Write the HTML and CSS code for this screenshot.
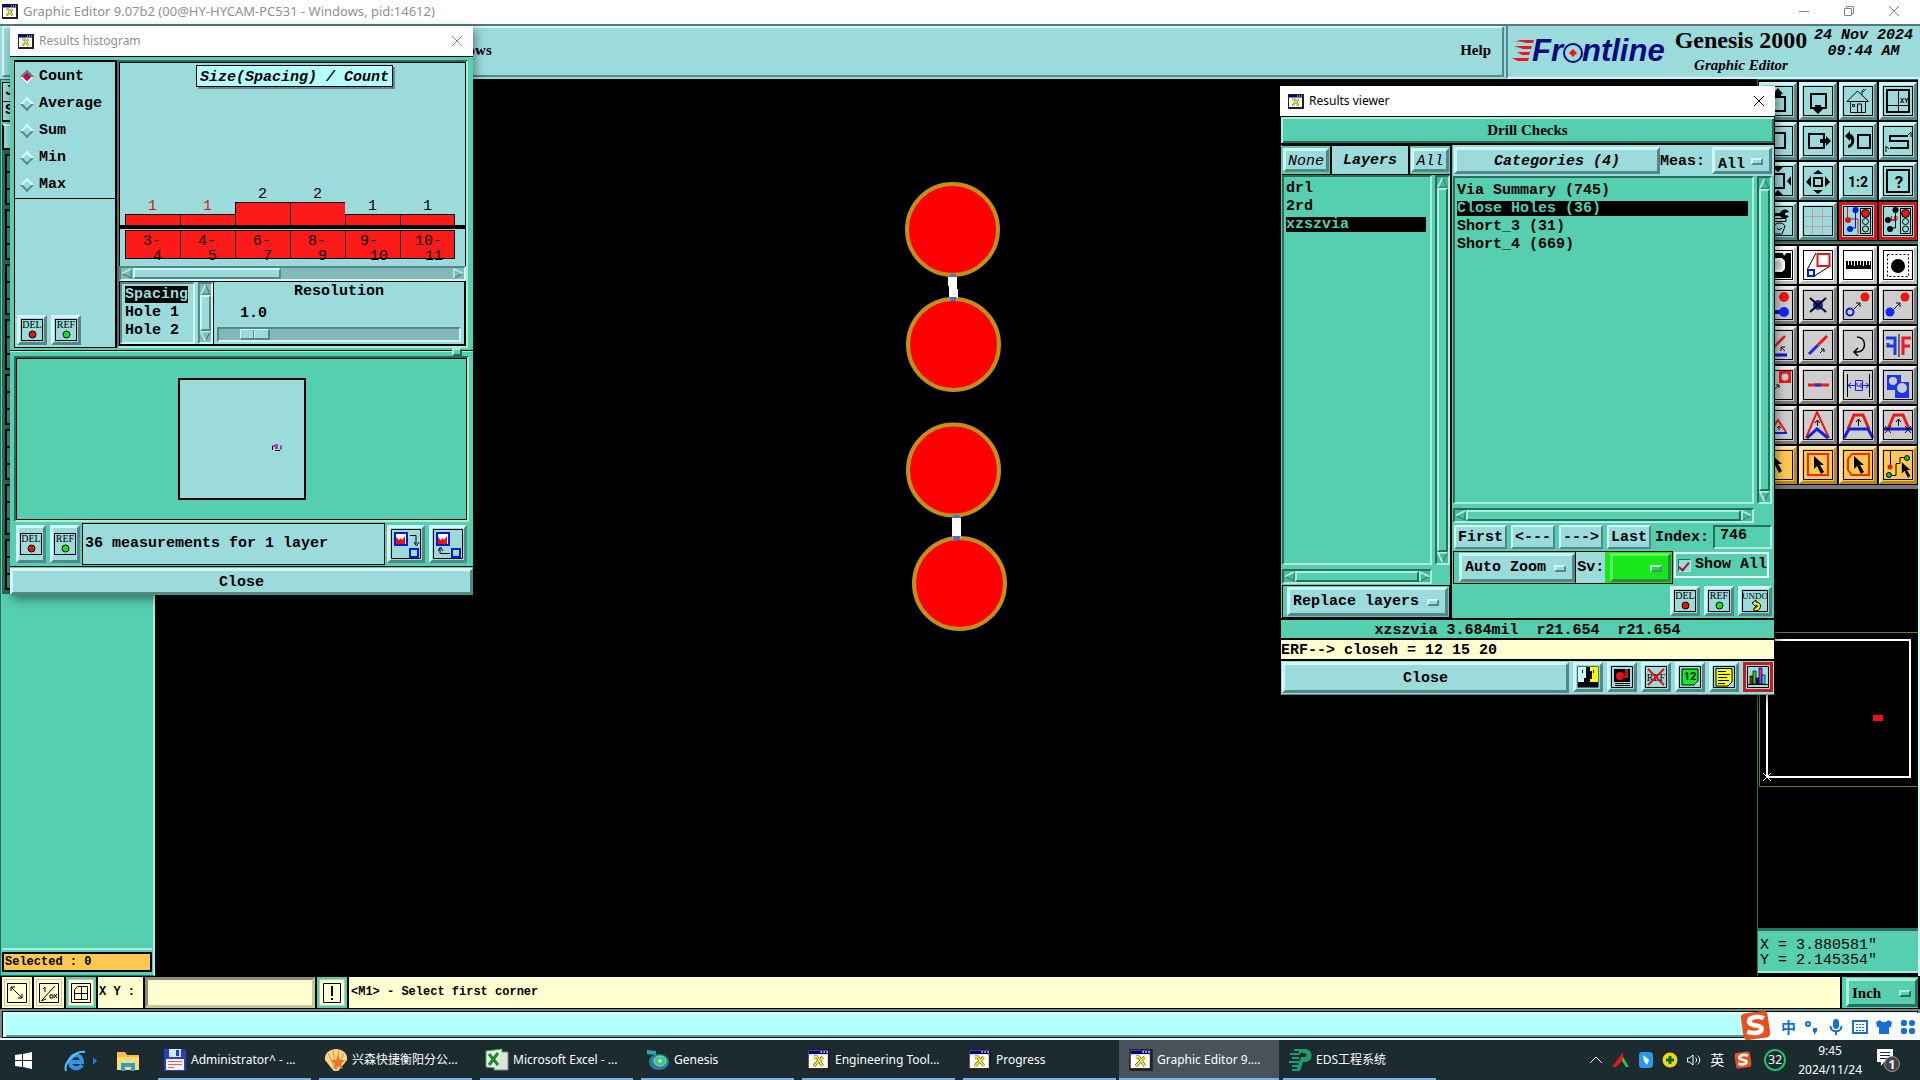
FILE: index.html
```html
<!DOCTYPE html>
<html lang="en">
<head>
<meta charset="utf-8">
<title>Graphic Editor</title>
<link rel="stylesheet" href="styles.css">
</head>
<body>
<svg class="defs" aria-hidden="true">
  <defs>
    <symbol id="xwin" viewBox="0 0 16 15"><rect width="16" height="15" fill="#222"/><rect x="1" y="1" width="13" height="12" fill="#fff"/><rect x="1" y="1" width="13" height="2.500" fill="#000080"/><path d="M9 2h1M11 2h1M13 2h1" stroke="#fff"/><path d="M4.500 5.500h2l4 6M10.500 5.500L4.500 11.500" fill="none" stroke="#444" stroke-width="2"/><path d="M4.500 5.500h2l4 6M10.500 5.500L4.500 11.500" fill="none" stroke="#f4ee20" stroke-width="1.300"/></symbol>
    <symbol id="del" viewBox="0 0 24 24"><rect x="1.500" y="1.500" width="21" height="21" fill="none" stroke="#000"/><text x="12" y="10" class="cap">DEL</text><circle cx="12.500" cy="16.500" r="3.500" fill="#f01010" stroke="#000"/></symbol>
    <symbol id="ref" viewBox="0 0 24 24"><rect x="1.500" y="1.500" width="21" height="21" fill="none" stroke="#000"/><text x="12" y="10" class="cap">REF</text><circle cx="12.500" cy="16.500" r="3.500" fill="#10e820" stroke="#000"/></symbol>
    <symbol id="up" viewBox="0 0 12 12"><path d="M6 1L11 11H1z" fill="none" stroke="#286e5c"/><path d="M1 11L6 1" stroke="#a9f0dc" stroke-width="2"/></symbol>
    <symbol id="down" viewBox="0 0 12 12"><path d="M1 1h10L6 11z" fill="none" stroke="#286e5c"/><path d="M11 1H1l5 10" fill="none" stroke="#a9f0dc" stroke-width="2"/></symbol>
    <symbol id="lt" viewBox="0 0 12 12"><path d="M11 1v10L1 6z" fill="none" stroke="#286e5c"/><path d="M11 1L1 6" stroke="#a9f0dc" stroke-width="2"/></symbol>
    <symbol id="rt" viewBox="0 0 12 12"><path d="M1 1l10 5L1 11z" fill="none" stroke="#286e5c"/><path d="M1 11V1l10 5" fill="none" stroke="#a9f0dc" stroke-width="2"/></symbol>
    <symbol id="cursor" viewBox="0 0 14 18"><path d="M1 0l10 9-4 0 4 7-3 2-4-8-3 3z"/></symbol>
    <symbol id="sogou" viewBox="0 0 30 30"><rect x="2" y="2" width="26" height="26" rx="4" fill="#e8501c" transform="rotate(-8 15 15)"/><path d="M23 8C17 5 8 7 9 12c1 4 12 2 12 6 0 5-8 5-14 3" fill="none" stroke="#fff" stroke-width="4.500"/></symbol>
  </defs>
</svg>

<div class="app">
  <header class="titlebar main-title">
    <svg class="ico16"><use href="#xwin"/></svg>
    <h1>Graphic Editor 9.07b2 (00@HY-HYCAM-PC531 - Windows, pid:14612)</h1>
    <div class="wincontrols">
      <button aria-label="Minimize"><svg width="12" height="12"><path d="M1 6.500h10" stroke="#888"/></svg></button>
      <button aria-label="Restore"><svg width="12" height="12" fill="none" stroke="#888"><path d="M1.500 3.500h7v7h-7zM3.500 3.500v-2h7v7h-2"/></svg></button>
      <button aria-label="Close"><svg width="12" height="12" stroke="#888"><path d="M1 1l10 10M11 1L1 11"/></svg></button>
    </div>
  </header>

  <div class="menurow">
    <nav class="menubar"><a href="#" class="m-windows">Windows</a><a href="#">Help</a></nav>
    <div class="brand">
      <svg class="logo" width="156" height="28" viewBox="0 0 156 28">
        <path d="M5 3h17l-1 3h-7zM2 9h18l-1 3h-8zM5 15h13l-1 3h-7zM0 21h17l-1 3H6z" fill="#ee1418"/>
        <path d="M0 5l16-2v1zM0 23l16-2v1z" fill="#ee1418"/>
        <text x="20" y="24" class="logotext">Fr</text>
        <circle cx="61" cy="16" r="9" fill="none" stroke="#0a0a80" stroke-width="2"/>
        <path d="M61 12l4 4-4 4-4-4z" fill="#ee1418"/>
        <text x="70" y="24" class="logotext">ntline</text>
      </svg>
      <div class="product"><strong>Genesis 2000</strong><em>Graphic Editor</em></div>
      <time class="stamp">24 Nov 2024<br>09:44 AM</time>
    </div>
  </div>

  <main class="work">
    <aside class="left">
      <div class="jobbox"><span>J</span><span>S</span></div>
      <div class="jobbtn"></div>
      <div class="layers"><i></i><i></i><i></i><i></i><i></i><i></i><i></i><i></i></div>
      <div class="leftfill"></div>
      <div class="selected">Selected : 0</div>
    </aside>

    <section class="canvas">
      <svg width="100%" height="100%">
        <g fill="#f00" stroke="#c09018" stroke-width="4">
          <circle cx="797.500" cy="150.500" r="45.500"/><circle cx="798.500" cy="265.500" r="45.500"/>
          <circle cx="798.500" cy="391" r="45.500"/><circle cx="804.500" cy="504.500" r="45.500"/>
        </g>
        <path d="M793 198h9v12h1v9h-9v-12h-1zM797 439h9v20h-9z" fill="#fff"/>
        <path d="M794 198l2-3h4l2 3zM794 218h8l-2 4h-4zM797 439l2-3h5l2 3zM797 457h9l-2 4h-5z" fill="#3e70e0"/>
      </svg>
    </section>

    <aside class="right">
      <div class="tools t1">
        <button aria-label="Pan up"><svg viewBox="0 0 32 32"><path d="M8 12h15v14H8z" class="k2"/><path d="M16 3l5 6h-2v4h-6V9h-2z"/></svg></button>
        <button aria-label="Pan down"><svg viewBox="0 0 32 32"><path d="M9 9h15v14H9z" class="k2"/><path d="M16 29l5-5h-2v-4h-6v4h-2z"/></svg></button>
        <button aria-label="Home"><svg viewBox="0 0 32 32"><path d="M5 16.500L15.500 6l11 10.500zM8.500 17v10.500h15V17M15.500 27v-8h4v8M10.500 19.500h2v2h-2zM20 10V6l2-2M21 7l3-3" class="k1"/></svg></button>
        <button aria-label="Zoom window"><svg viewBox="0 0 32 32"><path d="M5 5h22v22H5z" class="k2"/><path d="M5 20.500h22M16.500 5v22" class="k1"/><text x="18" y="18" class="tiny">XY</text></svg></button>
        <button aria-label="Pan left"><svg viewBox="0 0 32 32"><path d="M7 8h16v15H7z" class="k2"/></svg></button>
        <button aria-label="Pan right"><svg viewBox="0 0 32 32"><path d="M7 9h15v14H7z" class="k2"/><path d="M29 16l-5 5v-3h-6v-4h6v-3z"/></svg></button>
        <button aria-label="Previous view"><svg viewBox="0 0 32 32"><path d="M16 10h12v13H16z" class="k2"/><path d="M3 11l5-5v3c6 1 6 13-2 14v-3c4-1 4-6 2-6v2z"/></svg></button>
        <button aria-label="Serpentine"><svg viewBox="0 0 32 32"><path d="M26 11H8v5h18v7H8" class="k2"/><path d="M26 10l3-3v5M7 24l-3-3v6" class="k1"/></svg></button>
        <button aria-label="Zoom out"><svg viewBox="0 0 32 32"><path d="M9 9h13v14H9z" class="k2"/><path d="M16 7l-5-5h10zM16 25l-5 5h10zM25 16l4-5v10z"/></svg></button>
        <button aria-label="Zoom in"><svg viewBox="0 0 32 32"><path d="M12 13h8v8h-8z" class="k2"/><path d="M16 5l5 4H11zM16 29l5-4H11zM4 17l5-6v11zM28 17l-5-6v11z"/></svg></button>
        <button aria-label="One to two"><svg viewBox="0 0 32 32"><text x="16" y="22" class="big">1:2</text></svg></button>
        <button aria-label="Help"><svg viewBox="0 0 32 32"><path d="M5 5h22v22H5z" class="k2"/><text x="17" y="23" class="q">?</text></svg></button>
        <button aria-label="Setup"><svg viewBox="0 0 32 32"><path d="M10 8h8c2-5 8-4 9-1l-4 1v2l4 1c-2 3-7 3-9 0h-8z"/><path d="M8 13.500h16v3H8zM12 21c2-4 9-4 11 0l-3 8h-8l-4-6zM15 23l2 2 3-2" class="k1"/></svg></button>
        <button aria-label="Grid"><svg viewBox="0 0 32 32"><path d="M10.500 2v28M20.500 2v28M2 11.500h28M2 21.500h28" stroke="#c99" fill="none"/></svg></button>
        <button class="on" aria-label="Snap layers"><svg viewBox="0 0 32 32"><path d="M5.500 1v13H16v15" stroke="#e01010" fill="none"/><path d="M13.500 6v17H8" stroke="#0010d8" fill="none"/><circle cx="6" cy="15" r="3" fill="#e01010"/><circle cx="13.500" cy="5" r="3" fill="#0010f0"/><circle cx="8" cy="24" r="3" fill="#0010f0"/><g class="k1"><path d="M18.500 3.500h10v25h-10z"/><circle cx="23.500" cy="8.500" r="4" fill="#f01010"/><circle cx="23.500" cy="16.500" r="3"/><circle cx="23.500" cy="24" r="3"/></g></svg></button>
        <button class="on" aria-label="Snap nets"><svg viewBox="0 0 32 32"><path d="M13.500 6v17H8M6 15h8" class="k1"/><path d="M9 15h6M9.500 11v4M12.500 11v4M15 11v4" stroke="#e01010"/><circle cx="6" cy="15" r="3"/><circle cx="13.500" cy="5" r="3"/><circle cx="8" cy="24" r="3"/><g class="k1"><path d="M18.500 3.500h10v25h-10z"/><circle cx="23.500" cy="8.500" r="4" fill="#f01010"/><circle cx="23.500" cy="16.500" r="3"/><circle cx="23.500" cy="24" r="3"/></g></svg></button>
      </div>
      <div class="tools t2">
        <button class="w" aria-label="Pads"><svg viewBox="0 0 32 32"><path d="M8 4h21v25H8z"/><path d="M10 11l3-2h7l3 3v8l-3 3h-7l-3-3zM20 2h6l-4 5z" fill="#fff"/><rect x="12" y="12" width="8" height="8" rx="3" fill="#ddd"/></svg></button>
        <button class="w" aria-label="Copy scaled"><svg viewBox="0 0 32 32"><path d="M5 21L14 4M11 28l17-11" class="k1"/><path d="M15.500 5h12v12h-12z" stroke="#e8141c" stroke-width="2" fill="none"/><path d="M6 21h6v6H6z" stroke="#0018e0" stroke-width="2" fill="none"/></svg></button>
        <button class="w" aria-label="Measure"><svg viewBox="0 0 32 32"><path d="M4 12h25v8H4z"/><path d="M6.500 12v4M9.500 12v4M12.500 12v5M15.500 12v4M18.500 12v4M21.500 12v5M24.500 12v4M27.500 12v4" stroke="#fff"/></svg></button>
        <button class="w" aria-label="Select feature"><svg viewBox="0 0 32 32"><path d="M5.500 5.500h21v22h-21z" class="k1" stroke-dasharray="2 2"/><circle cx="16" cy="17" r="7"/></svg></button>
        <button aria-label="Connect"><svg viewBox="0 0 32 32"><circle cx="22" cy="8" r="5" fill="#f01414"/><path d="M8 23h14" stroke="#0018e0" stroke-width="4"/><circle cx="22" cy="23" r="5" fill="#1428f0"/></svg></button>
        <button aria-label="Delete"><svg viewBox="0 0 32 32"><circle cx="16" cy="16" r="5" fill="#1428d0"/><path d="M8 9l16 14M24 9L8 23" class="k2"/></svg></button>
        <button aria-label="Copy"><svg viewBox="0 0 32 32"><circle cx="23" cy="8" r="4.500" fill="#f01414"/><circle cx="8" cy="23" r="3.500" fill="none" stroke="#1020d0" stroke-width="2"/><path d="M12 20l6-6M14 14h4v4" class="k1"/></svg></button>
        <button aria-label="Move"><svg viewBox="0 0 32 32"><circle cx="23" cy="8" r="4.500" fill="#f01414"/><circle cx="8" cy="23" r="4.500" fill="#1428f0"/><path d="M12 20l6-6M14 14h4v4" class="k1"/></svg></button>
        <button aria-label="Rotate line"><svg viewBox="0 0 32 32"><path d="M8 22L23 7" stroke="#e8141c" stroke-width="2.500"/><path d="M8 26h17" stroke="#0018e0" stroke-width="3"/><path d="M23 22l-4-4M19 22v-4h4" class="k1"/></svg></button>
        <button aria-label="Extend line"><svg viewBox="0 0 32 32"><path d="M7 25l9-9" stroke="#1828f0" stroke-width="3"/><path d="M16 16l9-9" stroke="#f01820" stroke-width="3"/><path d="M18 24l4-4M19 20h3v3" class="k1"/></svg></button>
        <button aria-label="Rotate"><svg viewBox="0 0 32 32"><path d="M15 8c10 0 10 15 0 15h-3M16 19l-4 4 4 4" fill="none" stroke="#000" stroke-width="1.500"/></svg></button>
        <button aria-label="Mirror"><svg viewBox="0 0 32 32"><path d="M4 9h9v17M13 17H6v-3" stroke="#1838f0" stroke-width="3" fill="none"/><path d="M29 9h-8v17M21 17h7" stroke="#f01820" stroke-width="3" fill="none"/><path d="M17 5v23" class="k1"/></svg></button>
        <button aria-label="Reshape pad"><svg viewBox="0 0 32 32"><path d="M17 2h12v12H17z" fill="#f01818"/><circle cx="23" cy="8" r="3.500" fill="#ccc"/><path d="M13 20l4-4M14 16h3v3" class="k1"/></svg></button>
        <button aria-label="Break line"><svg viewBox="0 0 32 32"><path d="M6 16h21" stroke="#f01818" stroke-width="3"/><path d="M13 16h6" stroke="#2030e0" stroke-width="3"/></svg></button>
        <button aria-label="Stretch"><svg viewBox="0 0 32 32"><path d="M5.500 5v23M27.500 5v23" class="k1"/><path d="M13.500 11.500h7v10h-7zM6 16.500h7M21 16.500h6M9 14l-3 2.500L9 19M24 14l3 2.500-3 2.500M15 14v3h4M19 14v5" fill="none" stroke="#1020f0"/></svg></button>
        <button aria-label="Polarity"><svg viewBox="0 0 32 32"><path d="M5 6h14v7h8v16H13v-8H5z" fill="#1838f0"/><circle cx="11" cy="12" r="4" fill="#ccc"/><circle cx="20" cy="19" r="5" fill="#ccc"/></svg></button>
        <button aria-label="Peak small"><svg viewBox="0 0 32 32"><path d="M8 23l8-12 8 12" stroke="#f01818" stroke-width="2" fill="none"/><path d="M6 24h19" stroke="#1020e0" stroke-width="2"/><path d="M17 21v-4M15 19l2-2 2 2" class="k1"/></svg></button>
        <button aria-label="Peak large"><svg viewBox="0 0 32 32"><path d="M4 29L15 3l12 26" stroke="#f01818" stroke-width="2" fill="none"/><path d="M5 29l10-9 11 9" stroke="#1020e0" stroke-width="3" fill="none"/><path d="M15.500 17v-6M13 14l2.500-3 2.500 3" class="k1"/></svg></button>
        <button aria-label="Trapezoid"><svg viewBox="0 0 32 32"><path d="M6 20l6-14h9l6 14" stroke="#f01818" stroke-width="3" fill="none"/><path d="M2 29l5-9h19l5 9" stroke="#1020e0" stroke-width="3" fill="none"/><path d="M16.500 17v-7M14 13l2.500-3 2.500 3" class="k1"/></svg></button>
        <button aria-label="Trapezoid cut"><svg viewBox="0 0 32 32"><path d="M6 20l6-14h9l6 14" stroke="#f01818" stroke-width="3" fill="none"/><path d="M2 20h29" stroke="#1020e0" stroke-width="3"/><path d="M16.500 17v-7M14 13l2.500-3 2.500 3M3 17l6 7M9 17l-6 7M23 17l6 7M29 17l-6 7" class="k1"/></svg></button>
        <button class="o" aria-label="Select"><svg viewBox="0 0 32 32"><use href="#cursor" x="9" y="6" width="14" height="18"/></svg></button>
        <button class="o" aria-label="Select in rectangle"><svg viewBox="0 0 32 32"><path d="M6 5h20v21H6z" stroke="#e83010" stroke-width="2" fill="none"/><use href="#cursor" x="11" y="7" width="14" height="18"/></svg></button>
        <button class="o" aria-label="Select in polygon"><svg viewBox="0 0 32 32"><path d="M10 5h17v21H10l-4-5V10z" stroke="#e83010" stroke-width="2" fill="none"/><use href="#cursor" x="11" y="7" width="14" height="18"/></svg></button>
        <button class="o" aria-label="Select net"><svg viewBox="0 0 32 32"><path d="M8.500 2v15M7 26.500h7v-12h4v-6h6" class="k1"/><circle cx="8" cy="18" r="2.500" fill="#e02010"/><circle cx="7" cy="26" r="2.500" fill="#20c030" stroke="#000"/><circle cx="25" cy="9" r="2.500" fill="#20c030" stroke="#000"/><use href="#cursor" x="19" y="13" width="12" height="16"/></svg></button>
      </div>
      <div class="overview">
        <svg width="100%" height="100%">
          <path d="M1.500 143.500h159v154h-159z" fill="none" stroke="#4c8c28"/>
          <path d="M9 151h143v137H9z" fill="none" stroke="#fff" stroke-width="2"/>
          <path d="M5 284l8 8M13 284l-8 8" stroke="#fff"/>
          <rect x="115" y="226" width="10" height="6" fill="#f01010"/>
        </svg>
      </div>
      <div class="coords">X = 3.880581"<br>Y = 2.145354"</div>
    </aside>
  </main>

  <div class="cmdrow">
    <button class="cell ybtn" aria-label="Absolute"><svg width="22" height="22"><path d="M1.500 1.500h19v19h-19zM5 5l11 11M5 9V5h4M16 12v4h-4" class="k1"/></svg></button>
    <button class="cell ybtn" aria-label="Relative"><svg width="22" height="22"><path d="M1.500 1.500h19v19h-19zM4 18L17 4M5 7l2-2v5M3 19l5-2M12 13h3v3h-3zM16 12l3 4M19 12l-3 4" class="k1"/></svg></button>
    <button class="cell ybtn teal" aria-label="Grid snap"><svg width="22" height="22"><path d="M1.500 1.500h19v19h-19zM4.500 8l3-3.500h10v13h-13zM11.500 4v14M4 11.500h14" class="k1"/></svg></button>
    <label class="cell xylabel" for="xy">X Y :</label>
    <input class="xy" id="xy" type="text">
    <button class="cell ybtn teal" aria-label="Alert"><svg width="22" height="22"><path d="M2.500 1.500h17v19h-17z" class="k1"/><path d="M11 4v10M11 16v2" class="k2"/></svg></button>
    <div class="message">&lt;M1&gt; - Select first corner</div>
    <div class="unit"><span class="opt tealopt"><select aria-label="Units"><option>Inch</option></select><i></i></span></div>
  </div>
  <div class="progress"><div></div></div>

  <footer class="taskbar">
    <button class="tb-ico start" aria-label="Start"><svg width="18" height="18" fill="#fff"><path d="M0 3l7-1v6H0zM8 2l9-2v8H8zM0 9h7v6l-7-1zM8 9h9v8l-9-2z"/></svg></button>
    <button class="tb-ico ie" aria-label="Internet Explorer"><svg width="34" height="24"><path d="M18 16c-3 5-12 4-12-3C6 4 18 4 18 13H8" fill="none" stroke="#2c96ea" stroke-width="4"/><path d="M2 22C-1 14 12 1 21 3" fill="none" stroke="#5cc0f8" stroke-width="2"/><path d="M29 8l4 4-4 4z" fill="#1e78e8"/></svg></button>
    <button class="tb-ico folder" aria-label="Explorer"><svg width="24" height="22"><path d="M1 2h8l2 3h12v15H1z" fill="#f5c04c"/><path d="M1 7h22v13H1z" fill="#ffdb78"/><path d="M5 21v-8h14v8h-4v-4H9v4z" fill="#2e9ad8"/></svg></button>
    <button class="task first"><svg width="24" height="24"><path d="M1 1h20l2 2v20H1z" fill="#2440c8"/><path d="M6 1h12v8H6z" fill="#d8e4f8"/><path d="M13 2h3v6h-3z" fill="#2440c8"/><path d="M3 11h18v11H3z" fill="#fdf0f0"/><path d="M5 13.500h14M5 16.500h14M5 19.500h6" stroke="#e06060"/></svg><span>Administrator^ - ...</span></button>
    <button class="task"><svg width="24" height="24"><path d="M12 1C5 1 0 6 1 12l7 9 2 2h4l2-2 7-9c1-6-4-11-11-11z" fill="#f8d48c"/><path d="M12 22L4 5M12 22L9 2M12 22L15 2M12 22l8-17" stroke="#d89840"/><path d="M14 7l2 5 5 0-4 4 2 5-5-3-5 3 2-5-4-4 5 0z" fill="#e87820"/></svg><span>兴森快捷衡阳分公...</span></button>
    <button class="task"><svg width="24" height="24"><path d="M1 3l16-2v20L1 19z" fill="#e4f4e0" stroke="#4a9c50"/><path d="M17 4h6v18H9" fill="#d8e8d4" stroke="#888"/><path d="M4 6l9 11M13 5L4 17" stroke="#1f8838" stroke-width="3"/></svg><span>Microsoft Excel - ...</span></button>
    <button class="task"><svg width="24" height="24"><path d="M1 2l9 1v4l-9-1z" fill="#20b0a8"/><ellipse cx="13" cy="14" rx="10" ry="8" fill="#2a7e98"/><ellipse cx="14" cy="13" rx="6" ry="5" fill="#38c0a0" stroke="#8ce0b8"/><circle cx="14" cy="13" r="2" fill="#e8d848"/></svg><span>Genesis</span></button>
    <button class="task"><svg width="24" height="22"><use href="#xwin"/></svg><span>Engineering Tool...</span></button>
    <button class="task"><svg width="24" height="22"><use href="#xwin"/></svg><span>Progress</span></button>
    <button class="task active"><svg width="24" height="22"><use href="#xwin"/></svg><span>Graphic Editor 9....</span></button>
    <button class="task"><svg width="24" height="24"><path d="M6 2h12M2 6h10M4 10h7M1 14h10M4 18h8M4 22h6" fill="none" stroke="#18a068" stroke-width="2"/><path d="M11 1h7c8 2 7 12 0 13h-3l-3 9H8l5-14h4c2-1 2-3 0-4h-6z" fill="#18a068"/></svg><span>EDS工程系统</span></button>
    <div class="tray">
      <svg width="16" height="16"><path d="M2 11l6-6 6 6" fill="none" stroke="#fff"/></svg>
      <svg width="18" height="16"><path d="M11 0v8L4 15H0z" fill="#e81818"/><path d="M11 5l6 10h-3l-4-6z" fill="#28d040"/></svg>
      <svg width="16" height="16"><rect x="1" width="14" height="16" rx="3" fill="#2898f0"/><path d="M5 3l6 5-2 5-3-4z" fill="#fff"/></svg>
      <svg width="16" height="16"><circle cx="8" cy="8" r="7.500" fill="#f0d818"/><path d="M8 4v8M4 8h8" stroke="#126828" stroke-width="3"/></svg>
      <svg width="16" height="16" fill="none" stroke="#fff"><path d="M1.500 6v4h2L7 13V3L3.500 6zM9.500 5.500c1.500 1.500 1.500 3.500 0 5M11.500 3.500c3 2.500 3 6.500 0 9"/></svg>
      <span class="ime">英</span>
      <svg width="18" height="18"><use href="#sogou"/></svg>
      <span class="badge32">32</span>
      <time class="clock">9:45<br>2024/11/24</time>
      <span class="notif"><svg width="26" height="26"><path d="M1 2h16v13H8l-3 4v-4H1z" fill="#fff"/><path d="M4 5.500h10M4 8.500h10M4 11.500h10" stroke="#1c2b30"/><circle cx="16" cy="17" r="7.500" fill="#444" stroke="#999"/><text x="16" y="22" class="ntext">1</text></svg></span>
    </div>
  </footer>

  <div class="sogou">
    <svg class="slogo" width="31" height="31"><use href="#sogou"/></svg>
    <span>中</span>
    <svg width="16" height="16"><circle cx="4" cy="5" r="2" fill="none" stroke="#1470d8" stroke-width="2"/><path d="M9 9h4v3l-3 4v-3H9z" fill="#1470d8"/></svg>
    <svg width="16" height="18"><rect x="5" y="1" width="6" height="10" rx="3" fill="#1470d8"/><path d="M2.500 8c0 7 11 7 11 0M8 13v4" fill="none" stroke="#1470d8" stroke-width="2"/></svg>
    <svg width="16" height="16" fill="none" stroke="#1470d8"><rect x="1" y="2" width="14" height="12" stroke-width="2"/><path d="M4 5.500h9M4 8.500h9M4 11.500h9" stroke-dasharray="2 1"/></svg>
    <svg width="16" height="16"><path d="M0 3l4-2c2 3 6 3 8 0l4 2-1 5h-2v7H3V8H1z" fill="#1470d8"/></svg>
    <svg width="16" height="16" fill="#1470d8"><rect x="1" y="1" width="6" height="6" rx="2"/><rect x="9" y="1" width="6" height="6" rx="3"/><rect x="1" y="9" width="6" height="6" rx="2"/><rect x="9" y="9" width="6" height="6" rx="2"/></svg>
  </div>

  <section class="window histogram">
    <header class="titlebar"><svg class="ico16"><use href="#xwin"/></svg><h2>Results histogram</h2><button aria-label="Close window"><svg width="12" height="12" stroke="#888"><path d="M1 1l10 10M11 1L1 11"/></svg></button></header>
    <div class="hbody">
      <div class="htop">
        <div class="stat">
          <fieldset>
            <label><input type="radio" name="stat" checked>Count</label>
            <label><input type="radio" name="stat">Average</label>
            <label><input type="radio" name="stat">Sum</label>
            <label><input type="radio" name="stat">Min</label>
            <label><input type="radio" name="stat">Max</label>
          </fieldset>
          <div class="pair"><button class="ib" aria-label="Delete"><svg><use href="#del"/></svg></button><button class="ib" aria-label="Refresh"><svg><use href="#ref"/></svg></button></div>
        </div>
        <div class="chartcol">
          <div class="chart">
            <div class="ctitle">Size(Spacing) / Count</div>
            <div class="bars">
              <div class="bar red"><b>1</b><i></i></div><div class="bar red"><b>1</b><i></i></div><div class="bar two"><b>2</b><i></i></div><div class="bar two"><b>2</b><i></i></div><div class="bar"><b>1</b><i></i></div><div class="bar"><b>1</b><i></i></div>
            </div>
            <div class="ranges"><div>3-<span>4</span></div><div>4-<span>5</span></div><div>6-<span>7</span></div><div>8-<span>9</span></div><div>9-<span>10</span></div><div>10-<span>11</span></div></div>
          </div>
          <div class="hs cyan"><svg><use href="#lt"/></svg><div class="thumb short"></div><svg class="end"><use href="#rt"/></svg></div>
          <div class="params">
            <ul class="plist"><li class="sel"><span>Spacing</span></li><li>Hole 1</li><li>Hole 2</li></ul>
            <div class="vs cyan"><svg><use href="#up"/></svg><div class="thumb"></div><svg><use href="#down"/></svg></div>
            <div class="res"><label for="res">Resolution</label><output>1.0</output><input id="res" type="range" min="0" max="10" step="0.1" value="1"></div>
          </div>
        </div>
      </div>
      <div class="sash"><i></i></div>
      <div class="map"><svg width="128" height="122"><rect x="1" y="1" width="126" height="120" fill="#9cdbdb" stroke="#000" stroke-width="2"/><path d="M94.500 72v-4h3M103 67.500v4M97 72.500h5" fill="none" stroke="#000"/><rect x="97" y="66" width="3" height="5" fill="#d020d0"/></svg></div>
      <div class="hfoot">
        <button class="ib tall" aria-label="Delete"><svg><use href="#del"/></svg></button><button class="ib tall" aria-label="Refresh"><svg><use href="#ref"/></svg></button>
        <div class="info">36 measurements for 1 layer</div>
        <button class="ib big2" aria-label="Histogram to layer"><svg viewBox="0 0 32 32"><path d="M1.500 1.500h29v29h-29z" class="k1"/><path d="M5 5h12v12H5z" fill="#fff" stroke="#0818d8" stroke-width="2"/><path d="M6 16V9l3 3 2-2 1 2 3-4v8z" fill="#f01010"/><path d="M20 21h8v8h-8z" stroke="#0818d8" stroke-width="2" fill="none"/><path d="M20 7.500h6V16M24 14l2.500 4 2.500-4" class="k1"/></svg></button>
        <button class="ib big2" aria-label="Layer to histogram"><svg viewBox="0 0 32 32"><path d="M1.500 1.500h29v29h-29z" class="k1"/><path d="M5 5h12v12H5z" fill="#fff" stroke="#0818d8" stroke-width="2"/><path d="M6 16V9l3 3 2-2 1 2 3-4v8z" fill="#f01010"/><path d="M20 21h8v8h-8z" stroke="#0818d8" stroke-width="2" fill="none"/><path d="M18 25.500H8V20M6 23l2.500-4 2.500 4" class="k1"/></svg></button>
      </div>
      <button class="mb wide">Close</button>
    </div>
  </section>

  <section class="window viewer">
    <header class="titlebar focus"><svg class="ico16"><use href="#xwin"/></svg><h2>Results viewer</h2><button aria-label="Close window"><svg width="12" height="12" stroke="#000"><path d="M1 1l10 10M11 1L1 11"/></svg></button></header>
    <div class="vbody">
      <div class="drill">Drill Checks</div>
      <div class="cols">
        <div class="lcol">
          <div class="lhead"><div><button class="mb thin">None</button></div><h3>Layers</h3><div><button class="mb thin">All</button></div></div>
          <div class="listrow"><ul class="list"><li>drl</li><li>2rd</li><li class="sel">xzszvia</li></ul><div class="vs"><svg><use href="#up"/></svg><div class="thumb"></div><svg><use href="#down"/></svg></div></div>
          <div class="hs"><svg><use href="#lt"/></svg><div class="thumb"></div><svg><use href="#rt"/></svg></div>
          <div class="replace"><span class="opt"><select aria-label="Layer action"><option>Replace layers</option></select><i></i></span></div>
        </div>
        <div class="rcol">
          <div class="rhead"><button class="mb cat">Categories (4)</button><label for="meas">Meas:</label><span class="opt"><select id="meas"><option>All</option></select><i></i></span></div>
          <div class="listrow"><ul class="list"><li>Via Summary (745)</li><li class="sel">Close Holes (36)</li><li>Short_3 (31)</li><li>Short_4 (669)</li></ul><div class="vs"><svg><use href="#up"/></svg><div class="thumb"></div><svg><use href="#down"/></svg></div></div>
          <div class="hs"><svg><use href="#lt"/></svg><div class="thumb"></div><svg><use href="#rt"/></svg></div>
          <div class="navrow"><button class="mb">First</button><button class="mb">&lt;---</button><button class="mb">---&gt;</button><button class="mb">Last</button><label for="idx">Index:</label><input id="idx" type="text" value="746"></div>
          <div class="zoomrow"><div class="zcell"><span class="opt"><select aria-label="Zoom mode"><option>Auto Zoom</option></select><i></i></span></div><label for="sv">Sv:</label><div class="gcell"><span class="opt green"><select id="sv"><option></option></select><i></i></span></div><label class="showall"><input type="checkbox" checked>Show All</label></div>
          <div class="actrow"><button class="ib" aria-label="Delete"><svg><use href="#del"/></svg></button><button class="ib" aria-label="Refresh"><svg><use href="#ref"/></svg></button><button class="ib undo" aria-label="Undo"><svg viewBox="0 0 28 24"><path d="M1.500 1.500h25v21h-25z" class="k1"/><text x="14" y="10" class="cap s">UNDO</text><path d="M11 14l4-3v2c6 0 6 8 0 9h-2v-3c4 0 4-3 2-3v2z" fill="#ffe820" stroke="#000"/></svg></button></div>
        </div>
      </div>
      <div class="status"><span>xzszvia 3.684mil</span><span>r21.654</span><span>r21.654</span></div>
      <div class="erf">ERF--&gt; closeh = 12 15 20</div>
      <div class="vfoot">
        <button class="mb">Close</button>
        <button class="ib" aria-label="Compare"><svg viewBox="0 0 24 24"><path d="M1.500 1.500h21v21h-21z"/><path d="M2 2h8v11H8v4H2z" fill="#cff"/><path d="M14 2h8v15h-8v-3h2V6h-2z" fill="#ff0"/><path d="M6.500 5v3M17.500 5v3" class="k1"/></svg></button>
        <button class="ib" aria-label="Record"><svg viewBox="0 0 24 24"><path d="M1.500 1.500h21v21h-21z" class="k1"/><path d="M4 4h16v13H4z"/><path d="M5 18.500h15M5 20.500h15" class="k1"/><circle cx="10" cy="11" r="4" fill="#f01010"/><path d="M10 11h5V4h3v9h-8z" fill="#c01010"/></svg></button>
        <button class="ib" aria-label="No reference"><svg viewBox="0 0 24 24"><path d="M1.500 1.500h21v21h-21z" class="k1"/><text x="12" y="16" class="cap">REF</text><path d="M4 4l16 16M20 4L4 20" stroke="#e01010" stroke-width="2"/></svg></button>
        <button class="ib" aria-label="Numbered"><svg viewBox="0 0 24 24"><path d="M1.500 1.500h21v21h-21z" class="k1"/><path d="M4 4h16v12l-4 4H4z" fill="#10f020" stroke="#000"/><text x="12" y="15" class="n12">12</text></svg></button>
        <button class="ib" aria-label="Notes"><svg viewBox="0 0 24 24"><path d="M1.500 1.500h21v21h-21z" class="k1"/><path d="M4 3.500h16V17l-4 4H4z" fill="#ff0" stroke="#000"/><path d="M6 6.500h8M6 9.500h12M6 12.500h9M6 15.500h11M6 18.500h7" class="k1"/></svg></button>
        <button class="ib hot" aria-label="Histogram"><svg viewBox="0 0 24 24"><path d="M1.500 1.500h21v21h-21z" class="k1"/><path d="M2 19.500h20" class="k1"/><g stroke="#000" stroke-width=".7"><path d="M4 11h3v8H4z" fill="#a02020"/><path d="M7 6h3v13H7z" fill="#10e020"/><path d="M10 13h3v6h-3z" fill="#1010a0"/><path d="M13 3h3v16h-3z" fill="#e020e0"/><path d="M16 10h3v9h-3z" fill="#20e0e0"/></g></svg></button>
      </div>
    </div>
  </section>
</div>
</body>
</html>
```
FILE: styles.css
```css
* { box-sizing: border-box; }
:root {
  --teal: #55cfb0; --teal-l: #a9f0dc; --teal-d: #286e5c;
  --cyan: #9cdbdb; --cyan-l: #d0f7f7; --cyan-d: #538888;
  --yellow: #ffffcf;
  --mono: "Liberation Mono", "Courier New", monospace;
  --serif: "Liberation Serif", "Times New Roman", serif;
  --ui: "Noto Sans", "Noto Sans CJK SC", sans-serif;
}
body { margin: 0; background: #000; font: bold 15px/18px var(--mono); color: #000; }
h1, h2, h3, ul, fieldset { margin: 0; padding: 0; border: 0; font: inherit; list-style: none; }
button, input, select { font: inherit; color: inherit; margin: 0; padding: 0; border: 0; background: none; border-radius: 0; }
select { appearance: none; }
svg { display: block; flex: none; }
a { color: inherit; text-decoration: none; }
.defs { position: absolute; width: 0; height: 0; }
.k1 { fill: none; stroke: #000; stroke-width: 1; }
.k2 { fill: none; stroke: #000; stroke-width: 2; }
.cap { font: 10px var(--serif); text-anchor: middle; }
.cap.s { font-size: 9px; }
.tiny { font: bold 7px var(--mono); }
.big { font: bold 14px "Roboto", sans-serif; text-anchor: middle; }
.q { font: bold 17px "Roboto", sans-serif; text-anchor: middle; }
.n12 { font: bold 11px "Roboto", sans-serif; text-anchor: middle; }
.ntext { font: bold 12px var(--ui); text-anchor: middle; fill: #fff; }

.app { position: relative; display: flex; flex-direction: column; height: 100vh; min-height: 860px; overflow: hidden; }

/* title bars */
.titlebar { display: flex; align-items: center; gap: 5px; height: 30px; padding: 0 8px; background: #fff; color: #909090; font: 12px/16px var(--ui); }
.titlebar h1, .titlebar h2 { flex: 1; }
.titlebar.focus { color: #000; }
.titlebar button { padding: 2px; }
.main-title { height: 24px; padding: 0 18px 2px 2px; flex: none; font-size: 13px; }
.ico16 { width: 16px; height: 15px; }
.wincontrols { display: flex; gap: 29px; }

/* menu and brand */
.menurow { display: flex; height: 55px; flex: none; background: var(--cyan); border-top: 2px solid #567878; }
.menubar { flex: 1; display: flex; align-items: center; justify-content: space-between; padding: 0 11px 3px 428px; border: 2px solid; border-color: var(--cyan-l) var(--cyan-d) var(--cyan-d) var(--cyan-l); margin: 0 2px 2px 2px; font: bold 15px/18px var(--serif); }
.brand { display: flex; width: 414px; padding: 2px 2px 0 4px; border-left: 2px solid var(--cyan-d); border-bottom: 2px solid var(--cyan-l); }
.logo { margin-top: 9px; overflow: visible; }
.logotext { font: italic bold 31px "Liberation Sans", Arial, sans-serif; fill: #0a0a80; }
.product { display: flex; flex-direction: column; align-items: center; width: 146px; flex: none; font: bold 24px/24px var(--serif); }
.product strong { white-space: nowrap; }
.product em { font-size: 15px; line-height: 26px; }
.stamp { font: italic bold 15px/16px var(--mono); text-align: center; white-space: nowrap; }

/* work area */
.work { flex: 1; display: flex; min-height: 0; }
.left { width: 155px; display: flex; flex-direction: column; background: var(--teal); border: 1px solid var(--teal-d); border-right: 2px solid var(--teal-l); padding: 2px 1px; }
.jobbox { border: 1px solid #000; background: var(--cyan); height: 40px; }
.jobbox span { display: block; height: 19px; line-height: 18px; padding-left: 2px; border-bottom: 1px solid #000; }
.jobbtn { height: 26px; margin-top: 2px; background: var(--cyan); border: 2px solid; border-color: var(--cyan-l) #000 #000 #000; }
.layers { height: 444px; display: flex; flex-direction: column; gap: 4px; padding: 4px 3px; background: #2d6658; }
.layers i { flex: 1; border: 2px solid #000; background: repeating-linear-gradient(#3e8a78 0 15px, #000 15px 17px); }
.leftfill { flex: 1; background: var(--teal); border-bottom: 2px solid var(--teal-l); }
.selected { margin: 2px 0 1px; height: 20px; border: 2px solid #000; background: #ffc850; font: bold 12px/16px var(--mono); padding-left: 1px; }
.canvas { flex: 1; min-width: 0; background: #000; }
.right { width: 163px; display: flex; flex-direction: column; background: #000; border-left: 1px solid var(--teal-d); border-right: 2px solid var(--cyan-l); }
.tools { display: grid; grid-template-columns: repeat(4, 38px); gap: 2px; padding: 2px 0 1px 1px; background: #000; border-top: 1px solid var(--teal-d); border-bottom: 2px solid var(--teal-d); }
.tools button { height: 38px; border: 3px solid; background: var(--cyan); border-color: var(--cyan-l) var(--cyan-d) var(--cyan-d) var(--cyan-l); }
.tools svg { width: 32px; height: 32px; outline: 1px solid #000; outline-offset: -2px; }
.t2 { border-top: 1px solid #777; border-bottom: 4px solid #777; }
.t2 button { background: #cdcdcd; border-color: #eee #777 #777 #eee; }
.t2 .w { background: #fff; border-color: #fff #bbb #bbb #fff; }
.t2 .o { background: #ffc850; border-color: #ffe6a8 #b88820 #b88820 #ffe6a8; }
.tools .on { border-color: #d81818; }
.overview { flex: 1; min-height: 0; }
.coords { height: 45px; padding: 7px 2px 0; background: var(--teal); border-top: 3px solid var(--teal-d); border-bottom: 2px solid var(--teal-l); font-weight: normal; line-height: 15px; margin-bottom: 3px; }

/* command row */
.cmdrow { display: flex; gap: 2px; flex: none; height: 33px; padding: 1px 2px; background: #000; font: bold 12px/30px var(--mono); }
.cell { flex: none; background: var(--yellow); }
.ybtn { width: 30px; padding: 2px; border: 2px solid var(--yellow); box-shadow: inset 1px 1px #c8c8a0, inset -1px -1px #c8c8a0; display: flex; align-items: center; justify-content: center; }
.ybtn.teal { border-color: var(--teal); }
.xylabel { width: 45px; padding-left: 1px; }
.xy { width: 170px; background: var(--yellow); border: 3px solid; border-color: #8c8c70 #c8c8a0 #c8c8a0 #8c8c70; padding: 0 4px; }
.message { flex: 1; background: var(--yellow); padding-left: 2px; }
.unit { width: 76px; background: var(--teal); padding: 1px 0 1px 4px; display: flex; }
.unit .opt { flex: 1; font: bold 15px/20px var(--serif); }
.progress { flex: none; height: 31px; padding-top: 2px; background: #6c8c8c; border-bottom: 2px solid #dff; }
.progress div { height: 27px; margin: 0 2px; background: #b4fffd; border: 1px solid #000; box-shadow: inset 3px 3px #d8ffff, inset -2px -2px #5a9c9c; }

/* Motif controls */
.mb, .ib { border: 3px solid; border-color: var(--cyan-l) var(--cyan-d) var(--cyan-d) var(--cyan-l); background: var(--cyan); }
.mb { line-height: 18px; padding-top: 2px; white-space: nowrap; }
.ib { width: 30px; height: 30px; flex: none; display: flex; align-items: center; justify-content: center; }
.ib svg { width: 24px; height: 24px; }
.tall { height: 38px; }
.big2 { width: 38px; height: 38px; }
.big2 svg { width: 32px; height: 32px; }
.opt { position: relative; display: flex; border: 3px solid; border-color: var(--cyan-l) var(--cyan-d) var(--cyan-d) var(--cyan-l); background: var(--cyan); }
.opt select { flex: 1; min-width: 0; padding-left: 3px; }
.opt i { position: absolute; right: 6px; top: 50%; margin-top: -3px; width: 12px; height: 7px; border: 2px solid; border-color: var(--cyan-l) var(--cyan-d) var(--cyan-d) var(--cyan-l); pointer-events: none; }
.tealopt { background: var(--teal); border-color: var(--teal-l) var(--teal-d) var(--teal-d) var(--teal-l); }
.tealopt i { right: 4px; border-color: var(--teal-l) var(--teal-d) var(--teal-d) var(--teal-l); }
.green { background: #18e818; border-color: #60f860 #2a8a4a #2a8a4a #60f860; }
.vs, .hs { display: flex; background: #48b89c; border: 2px solid; border-color: var(--teal-d) var(--teal-l) var(--teal-l) var(--teal-d); }
.vs { flex-direction: column; width: 15px; }
.vs svg, .hs svg { width: 11px; height: 11px; }
.hs { height: 15px; }
.thumb { flex: 1; background: var(--teal); border: 2px solid; border-color: var(--teal-l) var(--teal-d) var(--teal-d) var(--teal-l); }
.cyan { background: #84b8b8; border-color: var(--cyan-d) var(--cyan-l) var(--cyan-l) var(--cyan-d); }
.cyan .thumb { background: var(--cyan); border-color: var(--cyan-l) var(--cyan-d) var(--cyan-d) var(--cyan-l); }
.cyan .short { flex: 0 0 148px; margin-left: 1px; }
.end { margin-left: auto; }

/* floating windows */
.window { position: absolute; box-shadow: 2px 4px 10px rgba(0, 0, 0, .45); }
.histogram { left: 10px; top: 26px; width: 463px; }
.viewer { right: 145px; top: 86px; width: 495px; }

.hbody { background: var(--teal); border-top: 1px solid #000; }
.htop { display: flex; height: 291px; padding: 3px 5px 0 4px; }
.stat { width: 103px; display: flex; flex-direction: column; justify-content: space-between; background: var(--cyan); border: 2px solid #000; border-width: 2px 2px 1px 1px; }
.stat fieldset { border-bottom: 1px solid #000; padding-top: 1px; }
.stat label { display: flex; align-items: center; gap: 7px; height: 27px; padding-left: 7px; }
.stat input { appearance: none; width: 10px; height: 10px; transform: rotate(45deg); border: 2px solid; border-color: #e0ffff #538888 #538888 #e0ffff; }
.stat input:checked { background: #d00048; border-color: #538888 #e0ffff #e0ffff #538888; }
.pair { display: flex; gap: 4px; padding: 2px; }
.chartcol { flex: 1; display: flex; flex-direction: column; border: 2px solid; border-color: var(--teal-d) var(--teal-l) var(--teal-l) #666; }
.chart { height: 206px; display: flex; flex-direction: column; background: var(--cyan); border: 1px solid #000; border-bottom: 0; }
.ctitle { align-self: center; margin: 2px 0 0 4px; height: 22px; padding: 0 3px; line-height: 24px; font-style: italic; background: #b4fffd; border: 1px solid #000; box-shadow: 2px 2px #6a8a8a; }
.bars { flex: 1; display: flex; align-items: flex-end; padding-left: 5px; border-bottom: 4px solid #000; }
.bar { width: 55px; text-align: center; }
.bar b { display: block; line-height: 15px; font-weight: normal; }
.bar.red b { color: #e01414; }
.bar i { display: block; height: 11px; background: #ff1a1a; border: 1px solid #000; border-width: 1px 0 0 1px; }
.bar.two i { height: 23px; }
.bar:last-child i { border-right-width: 1px; }
.ranges { display: flex; margin: 1px 0 7px 5px; }
.ranges div { width: 55px; height: 29px; padding: 3px 0 0 17px; background: #ff1a1a; border: 1px solid #000; border-right-width: 0; line-height: 15px; font-weight: normal; }
.ranges div:nth-child(n+5) { padding-left: 14px; }
.ranges div:last-child { border-right-width: 1px; }
.ranges span { display: block; padding-left: 10px; }
.params { flex: 1; display: flex; background: var(--cyan); border: 2px solid #000; border-width: 1px 2px 2px 1px; }
.plist { width: 75px; padding: 2px 3px; border: 2px solid; border-color: var(--cyan-d) var(--cyan-l) var(--cyan-l) var(--cyan-d); }
.plist .sel span { background: #000; color: var(--cyan); }
.params .vs { margin-left: 3px; }
.res { flex: 1; display: flex; flex-direction: column; border-left: 1px solid #000; padding: 1px 3px 2px; text-align: center; }
.res output { text-align: left; padding: 4px 0 1px 23px; }
.res input { appearance: none; height: 15px; background: #84b8b8; border: 2px solid; border-color: var(--cyan-d) var(--cyan-l) var(--cyan-l) var(--cyan-d); margin-top: auto; }
.res input::-webkit-slider-thumb { appearance: none; width: 30px; height: 11px; background: linear-gradient(90deg, var(--cyan) 12px, #538888 12px 13px, var(--cyan-l) 13px 14px, var(--cyan) 14px); border: 2px solid; border-color: var(--cyan-l) var(--cyan-d) var(--cyan-d) var(--cyan-l); border-width: 1px 2px 2px 1px; }
.sash { height: 8px; display: flex; align-items: center; justify-content: flex-end; padding-right: 11px; background: linear-gradient(var(--teal) 2px, #000 2px 3px, var(--teal-l) 3px 4px, var(--teal) 4px); }
.sash i { width: 10px; height: 8px; background: var(--teal); border: 2px solid; border-color: var(--teal-l) var(--teal-d) var(--teal-d) var(--teal-l); }
.map { height: 166px; margin: 0 4px; display: flex; align-items: center; justify-content: center; border: 2px solid; border-color: var(--teal-d) var(--teal-l) var(--teal-l) var(--teal-d); outline: 1px solid #000; outline-offset: -3px; }
.hfoot { display: flex; gap: 4px; align-items: center; height: 45px; padding: 0 6px; border-bottom: 1px solid #000; margin-bottom: 1px; }
.info { flex: 1; height: 42px; margin: 0 -2px; padding-left: 2px; line-height: 40px; background: var(--cyan); border: 1px solid #000; }
.wide { display: block; width: 100%; height: 27px; }

.vbody { background: var(--cyan); border: 1px solid #000; border-bottom-color: var(--cyan-d); }
.drill { height: 28px; border-bottom: 2px solid #000; background: var(--teal); font: bold 15px/22px var(--serif); text-align: center; box-shadow: inset 2px 2px var(--teal-l), inset -2px -2px var(--teal-d); padding-top: 2px; }
.cols { display: flex; height: 473px; background: var(--teal); }
.lcol { width: 171px; display: flex; flex-direction: column; border-right: 2px solid #000; padding-left: 1px; }
.lhead { display: flex; height: 30px; gap: 2px; background: #000; padding-bottom: 1px; border-top: 1px solid #000; }
.lhead div { background: var(--teal); display: flex; padding: 2px 1px; }
.lhead div:first-child { width: 48px; }
.lhead div:last-child { width: 40px; }
.thin { flex: 1; font-weight: normal; font-style: italic; }
.lhead h3 { flex: 1; background: var(--cyan); text-align: center; font-style: italic; line-height: 30px; }
.listrow { flex: 1; display: flex; gap: 3px; min-height: 0; }
.list { flex: 1; padding: 4px 2px 2px; border: 2px solid; border-color: var(--teal-d) var(--teal-l) var(--teal-l) var(--teal-d); }
.lcol .list { padding-top: 3px; }
.list li { line-height: 18px; }
.list .sel { background: linear-gradient(transparent 1px, #000 1px 16px, transparent 16px); color: var(--teal); margin-right: 2px; }
.lcol > .hs, .rcol > .hs { margin: 4px 18px 0 0; }
.replace { height: 33px; margin-top: 1px; border: 1px solid #000; padding: 1px 1px 1px 4px; display: flex; }
.replace .opt { flex: 1; }
.rcol { flex: 1; min-width: 0; display: flex; flex-direction: column; padding: 0 2px 0 1px; }
.rhead { display: flex; height: 31px; margin-right: -2px; padding: 2px 2px 2px 1px; background: var(--cyan); line-height: 30px; }
.cat { flex: 1; font-style: italic; }
.rhead label { width: 52px; }
.rhead .opt { width: 60px; }
.navrow { display: flex; gap: 4px; height: 28px; padding: 2px 0 2px 1px; }
.navrow .mb:first-child { width: 53px; }
.navrow .mb { width: 44px; padding: 2px 0 0; border-width: 2px; }
.navrow label { width: 54px; line-height: 26px; }
.navrow input { flex: 1; min-width: 0; border: 2px solid; border-color: var(--teal-d) var(--teal-l) var(--teal-l) var(--teal-d); padding: 0 5px 2px; }
.zoomrow { display: flex; height: 33px; align-items: flex-start; }
.zcell { width: 124px; height: 33px; display: flex; border: 1px solid #000; padding: 1px 0 1px 5px; }
.zoomrow .opt { flex: 1; }
.zoomrow > label:not(.showall) { height: 33px; line-height: 31px; padding: 0 1px; background: var(--cyan); border: 1px solid #000; border-width: 1px 0; }
.gcell { width: 68px; height: 33px; display: flex; background: #18e818; border: 1px solid #000; border-left: 0; padding: 1px 1px 1px 5px; }
.showall { flex: 1; display: flex; align-items: center; gap: 4px; height: 26px; margin: 1px 3px 0 1px; padding-left: 2px; border: 2px solid #e8fff8; white-space: nowrap; }
.showall input { appearance: none; display: grid; place-items: center; width: 13px; height: 13px; border: 1px solid; border-color: var(--teal-d) var(--teal-l) var(--teal-l) var(--teal-d); background: var(--cyan); }
.showall input:checked::before { content: ""; width: 4px; height: 9px; border: solid #b01048; border-width: 0 2px 2px 0; transform: rotate(40deg); }
.actrow { display: flex; justify-content: flex-end; gap: 4px; height: 34px; padding-top: 2px; }
.undo { width: 34px; }
.undo svg { width: 28px; }
.status { display: flex; justify-content: center; gap: 18px; height: 22px; line-height: 21px; background: var(--teal); border: solid #000; border-width: 2px 0; }
.erf { height: 21px; line-height: 21px; background: var(--yellow); border-bottom: 2px solid #000; }
.vfoot { display: flex; gap: 4px; height: 33px; padding: 1px 1px 1px 1px; }
.vfoot .mb { flex: 1; }
.hot { border-color: #c81c1c; }

/* taskbar */
.taskbar { display: flex; flex: none; height: 40px; background: #1c2b30; color: #fff; font: 12px/16px var(--ui); }
.tb-ico { display: flex; align-items: center; padding-top: 2px; }
.start { width: 64px; padding-left: 15px; }
.ie { width: 52px; }
.folder { width: 42px; }
.task { width: 153px; margin-right: 8px; display: flex; align-items: center; gap: 4px; padding: 2px 0 0 5px; border-bottom: 2px solid #76b4e8; white-space: nowrap; }
.task.active { width: 160px; margin: 0 4px 0 -5px; padding-left: 10px; background: #475358; }
.tray { margin-left: auto; display: flex; align-items: center; gap: 8px; padding-right: 18px; }
.ime { font-size: 14px; width: 16px; }
.badge32 { width: 22px; height: 22px; border: 2px solid #18c868; border-radius: 50%; line-height: 18px; text-align: center; margin: 0 4px; }
.clock { text-align: center; line-height: 19px; }
.notif { margin-left: 6px; }
.sogou { position: absolute; right: 0; bottom: 40px; display: flex; align-items: center; gap: 8px; width: 176px; height: 27px; padding-right: 4px; background: #fff; color: #1470d8; font: bold 15px/20px "Noto Sans CJK SC", sans-serif; justify-content: flex-end; }
.slogo { margin: 0 2px 2px -2px; }
```
